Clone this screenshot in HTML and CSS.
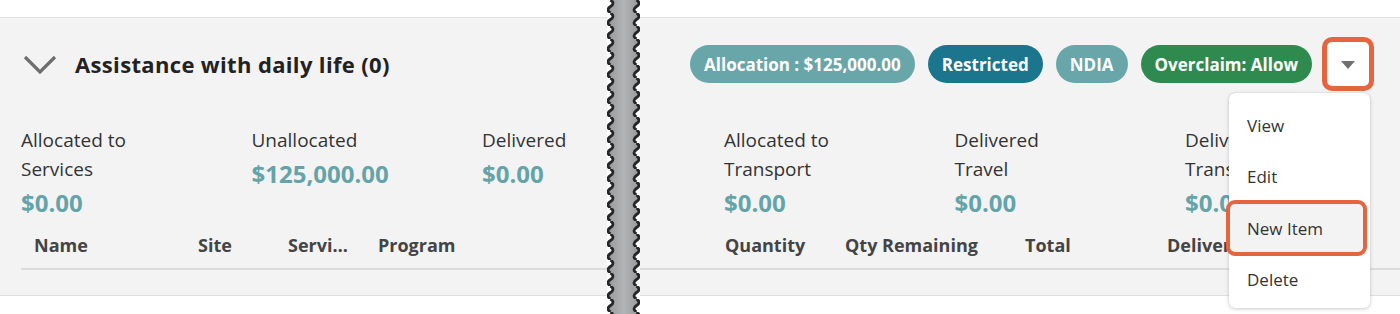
FILE: index.html
```html
<!DOCTYPE html>
<html lang="en">
<head>
<meta charset="utf-8">
<title>Assistance with daily life</title>
<link rel="stylesheet" href="styles.css">
</head>
<body>
<div class="page">
  <section class="half half-left">
    <div class="panel">
      <div class="head">
        <svg class="chev" width="34" height="22" viewBox="0 0 34 22"><path d="M2 4 L17 19 L32 4" fill="none" stroke="#6e6e6e" stroke-width="3.2"/></svg>
        <h2 class="title">Assistance with daily life (0)</h2>
      </div>
      <div class="stats">
        <div class="stat"><div class="label">Allocated to<br>Services</div><div class="value">$0.00</div></div>
        <div class="stat"><div class="label">Unallocated</div><div class="value">$125,000.00</div></div>
        <div class="stat"><div class="label">Delivered</div><div class="value">$0.00</div></div>
      </div>
      <div class="thead thead-left">
        <div class="th">Name</div>
        <div class="th">Site</div>
        <div class="th">Service Type</div>
        <div class="th">Program</div>
      </div>
    </div>
  </section>
  <div class="break">
    <svg width="33" height="314" viewBox="0 0 33 314">
      <defs>
        <linearGradient id="g" x1="0" x2="1" y1="0" y2="0">
          <stop offset="0" stop-color="#98999b"/>
          <stop offset="0.5" stop-color="#b3b4b6"/>
          <stop offset="1" stop-color="#98999b"/>
        </linearGradient>
        <pattern id="wave" width="33" height="13" patternUnits="userSpaceOnUse">
          <path d="M3.5 0 Q8.5 3.25 3.5 6.5 Q-1.5 9.75 3.5 13 L29.5 13 Q24.5 9.75 29.5 6.5 Q34.5 3.25 29.5 0 Z" fill="url(#g)"/>
          <path d="M3.5 0 Q8.5 3.25 3.5 6.5 Q-1.5 9.75 3.5 13" fill="none" stroke="#262626" stroke-width="2.8"/>
          <path d="M29.5 0 Q34.5 3.25 29.5 6.5 Q24.5 9.75 29.5 13" fill="none" stroke="#262626" stroke-width="2.8"/>
        </pattern>
      </defs>
      <rect x="0" y="0" width="33" height="314" fill="url(#wave)"/>
    </svg>
  </div>
  <section class="half half-right">
    <div class="panel">
      <div class="head head-right">
        <span class="badge badge-teal">Allocation : $125,000.00</span>
        <span class="badge badge-dark">Restricted</span>
        <span class="badge badge-teal">NDIA</span>
        <span class="badge badge-green">Overclaim: Allow</span>
        <button class="dd" type="button" aria-label="More actions">
          <svg width="16" height="10" viewBox="0 0 16 10"><path d="M1 1 L15 1 L8 9 Z" fill="#707070"/></svg>
        </button>
      </div>
      <div class="stats stats-right">
        <div class="stat"><div class="label">Allocated to<br>Transport</div><div class="value">$0.00</div></div>
        <div class="stat"><div class="label">Delivered<br>Travel</div><div class="value">$0.00</div></div>
        <div class="stat"><div class="label">Delivered<br>Transport</div><div class="value">$0.00</div></div>
      </div>
      <div class="thead thead-right">
        <div class="th"></div>
        <div class="th">Quantity</div>
        <div class="th">Qty Remaining</div>
        <div class="th">Total</div>
        <div class="th">Delivered</div>
      </div>
    </div>
  </section>
</div>
<ul class="menu">
  <li class="item">View</li>
  <li class="item">Edit</li>
  <li class="item item-focus">New Item</li>
  <li class="item item-last">Delete</li>
</ul>
</body>
</html>
```

FILE: styles.css
```css
* { box-sizing: border-box; }
html, body { margin: 0; padding: 0; }
body {
  width: 1400px;
  height: 314px;
  overflow: hidden;
  background: #ffffff;
  font-family: "Segoe UI", "Open Sans", "Noto Sans", sans-serif;
  color: #333;
  position: relative;
}
.page {
  display: flex;
  height: 314px;
}
.half {
  padding-top: 17px;
  overflow: hidden;
}
.half-left { width: 607px; flex: none; }
.half-right { flex: 1; min-width: 0; }
.break { width: 33px; flex: none; height: 314px; }
.break svg { display: block; }

.panel {
  background: #f3f3f3;
  border-top: 1px solid #e3e3e3;
  border-bottom: 1px solid #e0e0e0;
  padding: 8px 0 25px;
}
.half-left .panel { padding-left: 21px; }

.head {
  height: 76px;
  display: flex;
  align-items: center;
}
.chev { margin-left: 2px; flex: none; display: block; }
.title {
  margin: 0 0 0 18px;
  font-size: 22px;
  font-weight: 700;
  color: #222;
  letter-spacing: 0.35px;
}
.head-right {
  justify-content: flex-end;
  padding-right: 26px;
  gap: 13px;
}
.badge {
  height: 38px;
  border-radius: 19px;
  padding: 0 14px;
  display: flex;
  align-items: center;
  color: #fff;
  font-weight: 700;
  font-size: 17px;
  letter-spacing: 0;
  white-space: nowrap;
}
.badge-teal { background: #68a6aa; }
.badge-dark { background: #1b758c; }
.badge-green { background: #2f8a4f; }
.dd {
  width: 52px;
  height: 54px;
  margin-left: -3px;
  border: 5px solid #e5663e;
  border-radius: 10px;
  background: #fff;
  display: flex;
  align-items: center;
  justify-content: center;
  padding: 0;
}
.dd svg { display: block; margin-top: 2px; }

.stats {
  margin-top: 24px;
  display: flex;
}
.stats-right { padding-left: 84px; }
.stat { width: 230.5px; flex: none; }
.label {
  font-size: 19px;
  line-height: 29px;
  color: #333;
  white-space: nowrap;
}
.value {
  font-size: 24px;
  font-weight: 700;
  line-height: 38px;
  color: #64a4a9;
  white-space: nowrap;
}

.thead {
  display: grid;
  height: 48px;
  border-bottom: 2px solid #dcdcdc;
  align-items: center;
}
.thead-left { grid-template-columns: 164px 90px 90px 1fr; }
.thead-right { grid-template-columns: 72px 120px 180px 142px 1fr; }
.th {
  font-size: 18px;
  font-weight: 700;
  color: #444;
  padding-left: 13px;
  padding-right: 12px;
  white-space: nowrap;
  overflow: hidden;
  text-overflow: ellipsis;
}

.menu {
  position: absolute;
  left: 1229px;
  top: 93px;
  width: 141px;
  height: 215px;
  margin: 0;
  padding: 7px 0 0;
  list-style: none;
  background: #fff;
  border-radius: 6px;
  box-shadow: 0 1px 4px rgba(0,0,0,0.18), 0 0 1px rgba(0,0,0,0.2);
}
.item {
  height: 51px;
  display: flex;
  align-items: center;
  padding-left: 18px;
  font-size: 17px;
  color: #333;
}
.item-focus {
  height: 56px;
  margin: -2px 3px 0 -3px;
  border: 4px solid #e5663e;
  border-radius: 9px;
  background: #f3f3f3;
  padding-left: 17px;
}
.item-last { height: 47px; }
```
